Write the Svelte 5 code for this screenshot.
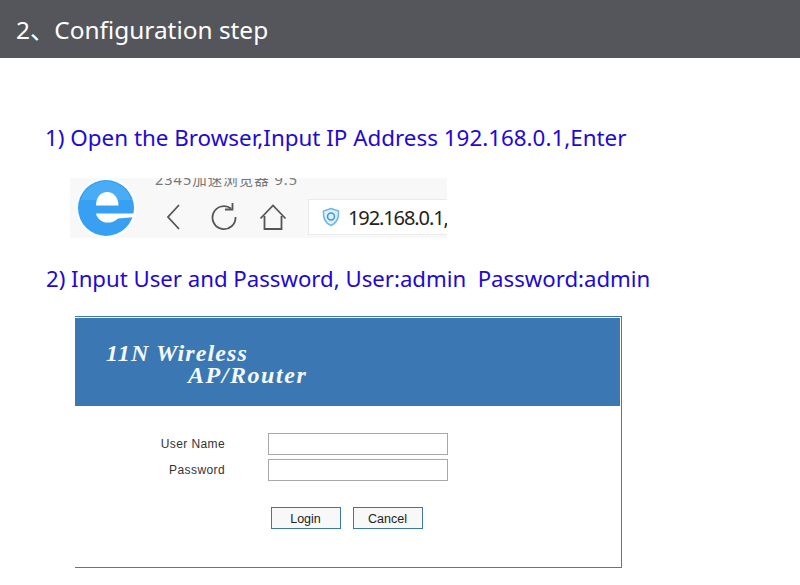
<script>
  const steps = {
    one: '1) Open the Browser,Input IP Address 192.168.0.1,Enter',
    two: '2) Input User and Password, User:admin\u00a0\u00a0Password:admin'
  };
</script>

<div class="page">
  <header class="banner"><h1>2、Configuration step</h1></header>

  <p class="step first">{steps.one}</p>

  <div class="browser">
    <svg class="logo" viewBox="0 0 60 60" width="60" height="60" aria-hidden="true">
      <circle cx="28" cy="30" r="30" fill="#fbfdff" />
      <circle cx="28" cy="30" r="28" fill="#37a0f2" />
      <path d="M3 22a26 26 0 0 1 50 0z" fill="#5cb8f7" opacity="0.5" />
      <path d="M18 27.500C18 19 23 14 29 14c7 0 11.500 6 11.500 13.500z" fill="#fff" />
      <path d="M18 35.500h40v3.500l-18 1.500c-4 3.500-8 4.500-12 4-5-.5-9-4.500-10-9z" fill="#fff" />
    </svg>
    <div class="chrome">
      <div class="caption">2345加速浏览器 9.5</div>
      <div class="toolbar">
        <svg viewBox="0 0 14 26" width="14" height="26" class="nav" aria-hidden="true"><path d="M13 1 2 13l11 12" /></svg>
        <svg viewBox="0 0 28 28" width="28" height="28" class="nav reload" aria-hidden="true"><path d="M20 5.500A11.500 11.500 0 1 0 24.500 14" /><path d="M14 6.500h7.500V0" /></svg>
        <svg viewBox="0 0 28 28" width="28" height="28" class="nav home" aria-hidden="true"><path d="M1.500 15.500 14 2.500l12.500 13" /><path d="M5.500 13v13h17V13" /></svg>
        <div class="address">
          <svg viewBox="0 0 18 20" width="18" height="20" class="shield" aria-hidden="true">
            <path d="M9 1.500 16.500 4c.5 7-1.500 12-7.500 14.500C3 16 1 11 1.500 4z" fill="#dceffb" stroke="#6db6e8" stroke-width="1.500" />
            <circle cx="9" cy="9.500" r="3.500" fill="none" stroke="#3d97d8" stroke-width="1.500" />
          </svg>
          <span>192.168.0.1,</span>
        </div>
      </div>
    </div>
  </div>

  <p class="step second">{steps.two}</p>

  <section class="router">
    <div class="hero">
      <div class="brand-a">11N Wireless</div>
      <div class="brand-b">AP/Router</div>
    </div>
    <form class="login" onsubmit={(e) => e.preventDefault()}>
      <div class="row">
        <label for="user">User Name</label>
        <input id="user" type="text" />
      </div>
      <div class="row">
        <label for="pass">Password</label>
        <input id="pass" type="password" />
      </div>
      <div class="actions">
        <button type="submit">Login</button>
        <button type="button">Cancel</button>
      </div>
    </form>
  </section>
</div>

<style>
  :global(body) {
    margin: 0;
    background: #fff;
  }
  .page {
    width: 800px;
    height: 585px;
    overflow: hidden;
    font-family: "Noto Sans", "Noto Sans CJK SC", sans-serif;
  }
  .banner {
    height: 58px;
    box-sizing: border-box;
    background: #54565c;
    display: flex;
    align-items: center;
    padding: 2px 0 0 16px;
  }
  h1 {
    margin: 0;
    color: #fff;
    font-size: 24.400px;
    font-weight: 400;
    line-height: 1;
  }
  .step {
    margin: 0;
    color: #2108d6;
    line-height: 32px;
    white-space: nowrap;
  }
  .first {
    font-size: 22.400px;
    margin: 64px 0 0 45px;
  }
  .second {
    font-size: 22.200px;
    margin: 25px 0 0 46px;
  }
  .browser {
    margin: 24px 0 0 70px;
    width: 377px;
    height: 60px;
    background: #f8f8f8;
    display: flex;
    overflow: hidden;
  }
  .logo {
    margin-left: 8px;
    flex: none;
  }
  .chrome {
    margin-left: 28px;
    flex: 1;
    min-width: 0;
  }
  .caption {
    margin: -8px 0 0 -11px;
    height: 29px;
    font-size: 14.500px;
    line-height: 18px;
    letter-spacing: 1px;
    color: #777;
    white-space: nowrap;
  }
  .toolbar {
    display: flex;
    align-items: center;
  }
  .nav {
    fill: none;
    stroke: #555;
    stroke-width: 1.800;
    flex: none;
  }
  .reload {
    margin-left: 31px;
  }
  .home {
    margin-left: 20px;
  }
  .address {
    margin-left: 21px;
    flex: 1;
    height: 36px;
    box-sizing: border-box;
    background: #fff;
    border: 1px solid #ebebeb;
    border-right: 0;
    display: flex;
    align-items: center;
    padding-left: 13px;
    gap: 8px;
    font-family: "Noto Sans", sans-serif;
    font-size: 20px;
    letter-spacing: -1.100px;
    color: #222;
    white-space: nowrap;
    overflow: hidden;
  }
  .shield {
    flex: none;
  }
  .router {
    margin: 21px 0 0 75px;
    width: 546px;
    height: 250px;
    border-top: 1px solid #3b78b2;
    border-right: 1px solid #4a7d9c;
    border-bottom: 1px solid #4a7d9c;
    background: #fff;
  }
  .hero {
    height: 88px;
    margin-top: 1px;
    margin-right: 1px;
    background: #3b78b3;
    color: #f4f8fc;
    font-family: "Liberation Serif", serif;
    font-style: italic;
    font-weight: 700;
    font-size: 24px;
    line-height: 24px;
    letter-spacing: 1.100px;
    padding-top: 1px;
    box-sizing: border-box;
  }
  .brand-a {
    padding: 22px 0 0 31px;
  }
  .brand-b {
    padding-left: 113px;
    margin-top: -2px;
    letter-spacing: 1.550px;
  }
  .login {
    padding-top: 27px;
    font-family: "Liberation Sans", sans-serif;
    font-size: 12px;
    color: #333;
  }
  .row {
    display: flex;
    align-items: center;
    height: 22px;
    margin-bottom: 4px;
  }
  label {
    width: 150px;
    text-align: right;
    letter-spacing: 0.400px;
  }
  input {
    margin: 0 0 0 43px;
    width: 180px;
    height: 22px;
    box-sizing: border-box;
    border: 1px solid #a8a8a8;
    background: #fff;
    padding: 0;
  }
  .actions {
    display: flex;
    gap: 12px;
    margin: 26px 0 0 196px;
  }
  button {
    width: 70px;
    height: 22px;
    box-sizing: border-box;
    border: 1px solid #3b78a8;
    border-radius: 0;
    background: #f8f8f8;
    font: inherit;
    font-size: 12.500px;
    color: #222;
    padding: 2px 1px 0 0;
  }
</style>
